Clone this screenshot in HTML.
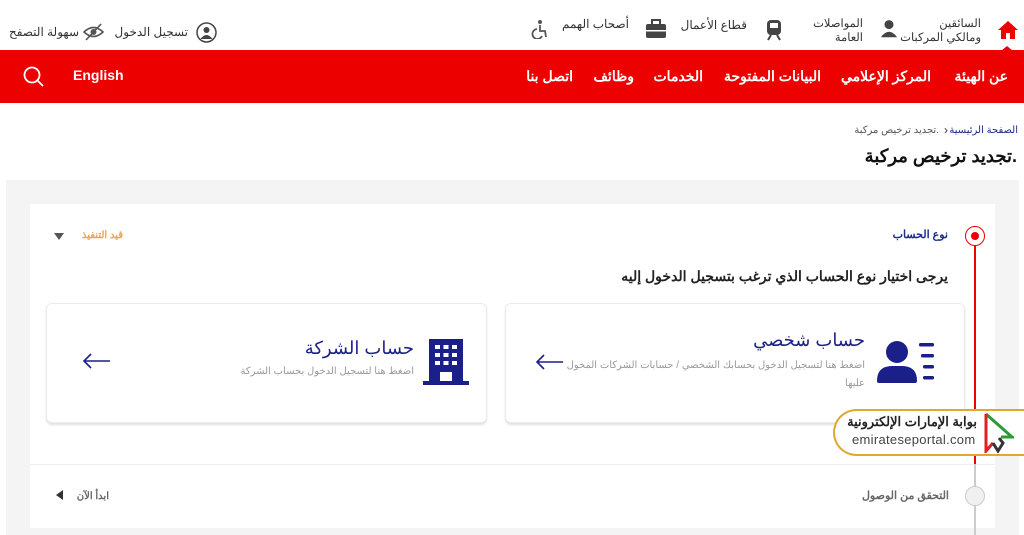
<!DOCTYPE html>
<html><head><meta charset="utf-8"><style>
*{margin:0;padding:0;box-sizing:border-box}
body{width:1024px;height:535px;overflow:hidden;background:#fff;font-family:"Liberation Sans","Noto Sans CJK SC",sans-serif;position:relative;color:#333}
.a{position:absolute;white-space:nowrap}
.t{font-size:12px;color:#333;direction:rtl}
.nav{position:absolute;left:0;top:50px;width:1024px;height:53px;background:#ec0000}
.nav .a{color:#fff;font-weight:bold;font-size:14px;top:18px;direction:rtl}
</style></head><body>
<svg class="a" style="left:997px;top:20px" width="22" height="20" viewBox="0 0 22 20"><path d="M11 1 L21 10 H18 V19 H13 V13 H9 V19 H4 V10 H1 Z" fill="#e00"/></svg>
<div class="a t" style="right:43px;top:17px;line-height:14px;text-align:right;font-size:11.5px">السائقين<br>ومالكي المركبات</div>
<svg class="a" style="left:880px;top:18px" width="18" height="24" viewBox="0 0 20 24"><circle cx="10" cy="6" r="5" fill="#444"/><path d="M1 20 Q10 8 19 20 Z" fill="#444"/></svg>
<div class="a t" style="right:161px;top:17px;line-height:14px;text-align:right;font-size:11.5px">المواصلات<br>العامة</div>
<svg class="a" style="left:764px;top:19px" width="20" height="22" viewBox="0 0 20 22"><rect x="3" y="1" width="14" height="15" rx="4" fill="#444"/><rect x="6" y="4" width="8" height="5" fill="#fff"/><path d="M4 21 L7 16 M16 21 L13 16" stroke="#444" stroke-width="2"/></svg>
<div class="a t" style="right:277px;top:18px">قطاع الأعمال</div>
<svg class="a" style="left:645px;top:19px" width="22" height="20" viewBox="0 0 22 20"><rect x="1" y="5" width="20" height="14" rx="2" fill="#444"/><rect x="7" y="1" width="8" height="5" fill="none" stroke="#444" stroke-width="2"/><rect x="1" y="11" width="20" height="1.5" fill="#fff"/></svg>
<div class="a t" style="right:395px;top:17px">أصحاب الهمم</div>
<svg class="a" style="left:530px;top:19px" width="18" height="20" viewBox="0 0 18 20"><circle cx="10" cy="3" r="2" fill="#555"/><path d="M10 6 V12 H15 L16 18 M7 10 A5 5 0 1 0 12 17" fill="none" stroke="#555" stroke-width="1.8"/></svg>
<svg class="a" style="left:196px;top:22px" width="21" height="21" viewBox="0 0 21 21"><circle cx="10.5" cy="10.5" r="9.5" fill="none" stroke="#444" stroke-width="1.5"/><circle cx="10.5" cy="8" r="3" fill="#444"/><path d="M4.5 17 Q10.5 9 16.5 17Z" fill="#444"/></svg>
<div class="a t" style="right:836px;top:25px">تسجيل الدخول</div>
<svg class="a" style="left:83px;top:23px" width="21" height="18" viewBox="0 0 21 18"><path d="M1 9 Q10.5 0 20 9 Q10.5 18 1 9Z" fill="none" stroke="#555" stroke-width="1.6"/><circle cx="10.5" cy="9" r="3" fill="#555"/><path d="M3 17 L18 1" stroke="#555" stroke-width="1.6"/></svg>
<div class="a t" style="right:945px;top:25px">سهولة التصفح</div>
<div class="nav">
<div class="a" style="right:16px">عن الهيئة</div>
<div class="a" style="right:93px">المركز الإعلامي</div>
<div class="a" style="right:203px">البيانات المفتوحة</div>
<div class="a" style="right:321px">الخدمات</div>
<div class="a" style="right:390px">وظائف</div>
<div class="a" style="right:451px">اتصل بنا</div>
<div class="a" style="left:73px;top:17px;direction:ltr">English</div>
<svg class="a" style="left:23px;top:16px" width="22" height="22" viewBox="0 0 22 22"><circle cx="9" cy="9" r="7.5" fill="none" stroke="#fff" stroke-width="1.8"/><path d="M14.5 14.5 L20 20" stroke="#fff" stroke-width="1.8"/></svg>
</div>
<svg class="a" style="left:1001px;top:46px" width="12" height="5"><path d="M0 5 L6 0 L12 5Z" fill="#ec0000"/></svg>
<div class="a" style="right:6px;top:125px;font-size:10px;color:#1a2a8a;direction:rtl">الصفحة الرئيسية</div>
<div class="a" style="left:944px;top:123px;font-size:12px;color:#333">›</div>
<div class="a" style="right:85px;top:125px;font-size:10px;color:#555;direction:rtl">.تجديد ترخيص مركبة</div>
<div class="a" style="right:7px;top:146px;font-size:18px;font-weight:bold;color:#111;direction:rtl">.تجديد ترخيص مركبة</div>
<div class="a" style="left:6px;top:180px;width:1013px;height:355px;background:#f4f4f4"></div>
<div class="a" style="left:30px;top:204px;width:965px;height:324px;background:#fff"></div>
<div class="a" style="left:30px;top:464px;width:965px;height:1px;background:#eee"></div>
<div class="a" style="left:974px;top:246px;width:1.5px;height:218px;background:#e00"></div>
<div class="a" style="left:974px;top:464px;width:1.5px;height:71px;background:#ccc"></div>
<div class="a" style="left:965px;top:226px;width:20px;height:20px;border-radius:50%;border:1.5px solid #e00;background:#fff"></div>
<div class="a" style="left:971px;top:232px;width:8px;height:8px;border-radius:50%;background:#e00"></div>
<div class="a" style="left:965px;top:486px;width:20px;height:20px;border-radius:50%;border:1px solid #ccc;background:#f0f0f0"></div>
<div class="a" style="right:76px;top:228px;font-size:11px;font-weight:bold;color:#1a2a8a;direction:rtl">نوع الحساب</div>
<div class="a" style="right:901px;top:230px;font-size:10px;font-weight:bold;color:#f0a050;direction:rtl">قيد التنفيذ</div>
<svg class="a" style="left:54px;top:233px" width="10" height="7"><path d="M0 0 H10 L5 7Z" fill="#555"/></svg>
<div class="a" style="right:76px;top:268px;font-size:14px;font-weight:bold;color:#222;direction:rtl">يرجى اختيار نوع الحساب الذي ترغب بتسجيل الدخول إليه</div>
<div class="a" style="right:75px;top:489px;font-size:11px;font-weight:bold;color:#666;direction:rtl">التحقق من الوصول</div>
<div class="a" style="right:915px;top:491px;font-size:10px;font-weight:bold;color:#666;direction:rtl">ابدأ الآن</div>
<svg class="a" style="left:56px;top:490px" width="7" height="10"><path d="M7 0 V10 L0 5Z" fill="#333"/></svg>
<div class="a" style="left:46px;top:303px;width:441px;height:120px;border:1px solid #f0eaea;border-radius:6px;box-shadow:0 2px 2px rgba(0,0,0,.12);background:#fff"></div>
<div class="a" style="left:505px;top:303px;width:460px;height:120px;border:1px solid #f0eaea;border-radius:6px;box-shadow:0 2px 2px rgba(0,0,0,.12);background:#fff"></div>
<svg class="a" style="left:423px;top:339px" width="46" height="46" viewBox="0 0 46 46"><rect x="6" y="0" width="34" height="44" fill="#1a1f8a"/><rect x="0" y="42" width="46" height="4" fill="#1a1f8a"/><g fill="#fff"><rect x="12" y="6" width="5" height="4"/><rect x="20.5" y="6" width="5" height="4"/><rect x="29" y="6" width="5" height="4"/><rect x="12" y="14" width="5" height="4"/><rect x="20.5" y="14" width="5" height="4"/><rect x="29" y="14" width="5" height="4"/><rect x="12" y="22" width="5" height="4"/><rect x="20.5" y="22" width="5" height="4"/><rect x="29" y="22" width="5" height="4"/><rect x="17" y="33" width="12" height="9"/></g></svg>
<div class="a" style="right:610px;top:338px;font-size:18px;color:#1a1f8a;direction:rtl">حساب الشركة</div>
<div class="a" style="right:610px;top:366px;font-size:10px;color:#999;direction:rtl">اضغط هنا لتسجيل الدخول بحساب الشركة</div>
<svg class="a" style="left:82px;top:353px" width="30" height="16"><path d="M28 8 H2 M9 1 L2 8 L9 15" fill="none" stroke="#1a1f8a" stroke-width="1.6"/></svg>
<svg class="a" style="left:877px;top:339px" width="58" height="44" viewBox="0 0 58 44"><circle cx="20" cy="13" r="11" fill="#1a1f8a"/><path d="M0 42 Q0 27 15 27 H25 Q40 27 40 42 Q40 44 38 44 H2 Q0 44 0 42Z" fill="#1a1f8a"/><g fill="#1a1f8a"><rect x="42" y="4" width="15" height="3.5" rx="1.5"/><rect x="44" y="15" width="13" height="3.5" rx="1.5"/><rect x="46" y="26" width="11" height="3.5" rx="1.5"/><rect x="46" y="37" width="11" height="3.5" rx="1.5"/></g></svg>
<div class="a" style="right:159px;top:330px;font-size:18px;color:#1a1f8a;direction:rtl">حساب شخصي</div>
<div class="a" style="right:159px;top:357px;font-size:10px;color:#999;direction:rtl;line-height:18px;text-align:right">اضغط هنا لتسجيل الدخول بحسابك الشخصي / حسابات الشركات المخول<br>عليها</div>
<svg class="a" style="left:535px;top:354px" width="30" height="16"><path d="M28 8 H2 M9 1 L2 8 L9 15" fill="none" stroke="#1a1f8a" stroke-width="1.6"/></svg>
<div class="a" style="left:833px;top:409px;width:200px;height:47px;border:2px solid #e0a830;border-right:none;border-radius:24px 0 0 24px;background:#fff"></div>
<div class="a" style="right:47px;top:414px;font-size:13px;font-weight:bold;color:#222;direction:rtl">بوابة الإمارات الإلكترونية</div>
<div class="a" style="left:852px;top:432px;font-size:13px;color:#444;letter-spacing:.3px">emirateseportal.com</div>
<svg class="a" style="left:984px;top:413px" width="30" height="40" viewBox="0 0 30 40"><path d="M2 1 L28 24 L17 24" fill="none" stroke="#2a9a3a" stroke-width="3"/><path d="M2 1 V38 L9 30" fill="none" stroke="#e02020" stroke-width="3"/><path d="M9 30 L14 38 L19 30 L15 25" fill="none" stroke="#333" stroke-width="3"/></svg>
</body></html>
